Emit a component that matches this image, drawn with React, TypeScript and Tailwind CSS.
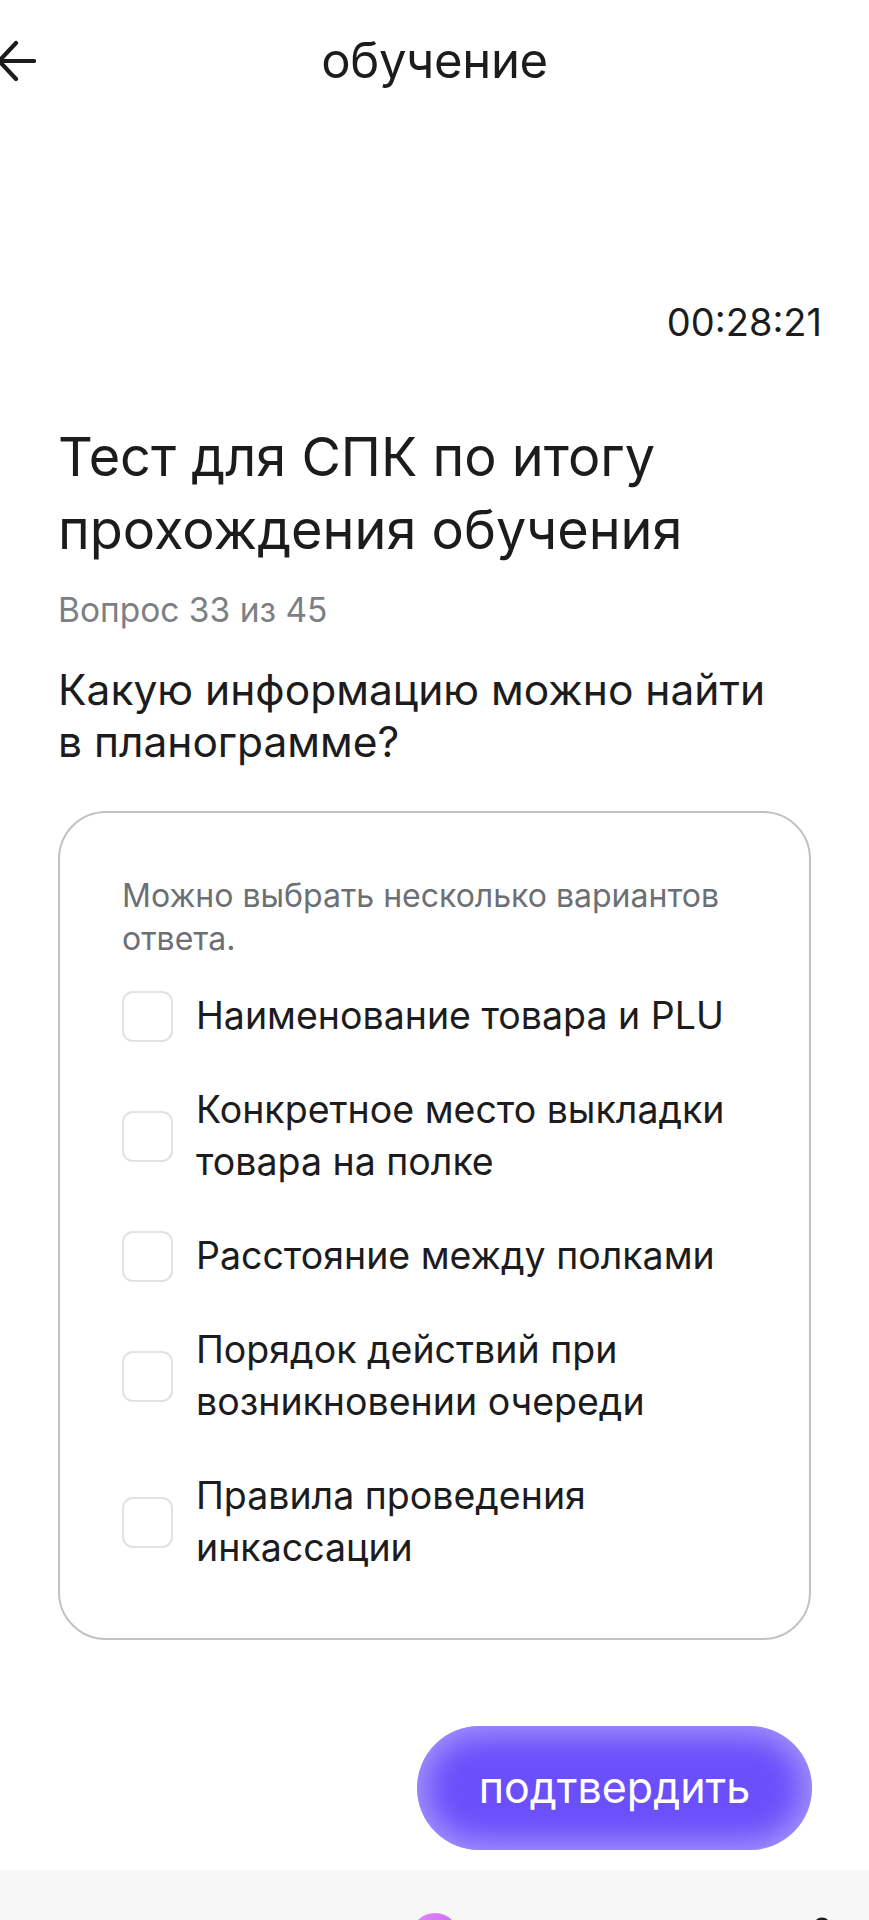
import React from "react";

const font = { fontFamily: "Inter, 'Noto Sans', sans-serif" };

const options: string[][] = [
  ["Наименование товара и PLU"],
  ["Конкретное место выкладки", "товара на полке"],
  ["Расстояние между полками"],
  ["Порядок действий при", "возникновении очереди"],
  ["Правила проведения", "инкассации"],
];

export default function App() {
  return (
    <div
      className="w-full h-[1920px] overflow-hidden bg-white flex flex-col text-[#1c1c1e]"
      style={font}
    >
      {/* header */}
      <div className="h-[122px] shrink-0 grid grid-cols-[1fr_auto_1fr] items-center">
        <div className="flex items-center">
          <svg width="40" height="44" viewBox="0 0 40 44" className="-ml-[4px]">
            <path
              d="M38 22 H5 M20 4 L3 22 L20 40"
              fill="none"
              stroke="#1c1c1e"
              strokeWidth="4.2"
              strokeLinecap="round"
              strokeLinejoin="round"
            />
          </svg>
        </div>
        <div className="text-[49px] leading-[56px] tracking-[-0.3px]">обучение</div>
        <div />
      </div>

      {/* timer */}
      <div className="mt-[178px] pr-[47px] flex justify-end text-[38px] leading-[44px]">
        00:28:21
      </div>

      {/* title */}
      <div className="px-[58px] flex flex-col">
        <h1 className="mt-[76px] text-[54px] leading-[73px] font-normal">
          Тест для СПК по итогу
          <br />
          прохождения обучения
        </h1>
        <div className="mt-[22px] text-[33.5px] leading-[44px] text-[#7c7f84]">
          Вопрос 33 из 45
        </div>
        <div className="mt-[32px] text-[42.5px] leading-[52px]">
          Какую информацию можно найти
          <br />в планограмме?
        </div>

        {/* card */}
        <div className="mt-[43px] border-2 border-[#c2c2c2] rounded-[48px] pt-[61px] pb-[64px] pl-[62px] pr-[30px] flex flex-col">
          <div className="text-[32px] leading-[43px] text-[#6c7075]">
            Можно выбрать несколько вариантов
            <br />
            ответа.
          </div>
          <div className="mt-[30px] flex flex-col gap-[42px]">
            {options.map((lines, i) => (
              <div key={i} className="flex items-center gap-[23px]">
                <div className="w-[51px] h-[51px] shrink-0 rounded-[11px] border-2 border-[#e2e2e2] bg-white" />
                <div className="text-[37.5px] leading-[52px]">
                  {lines.map((l, j) => (
                    <div key={j} className="whitespace-nowrap">
                      {l}
                    </div>
                  ))}
                </div>
              </div>
            ))}
          </div>
        </div>
      </div>

      {/* button */}
      <div className="mt-[86px] pr-[57px] flex justify-end">
        <button className="w-[395px] h-[124px] rounded-full bg-[#6a4ffb] shadow-[inset_0_0_32px_8px_rgba(255,255,255,0.42)] text-white text-[43px] leading-[48px] flex items-center justify-center pb-[2px]">
          подтвердить
        </button>
      </div>

      {/* bottom bar */}
      <div className="mt-[20px] flex-1 bg-[#f7f7f7] flex justify-between items-start pt-[43px] px-[37px]">
        <div className="w-[20px]" />
        <div className="w-[48px] h-[48px] rounded-full bg-gradient-to-br from-[#ee86f7] to-[#a85cf2]" />
        <svg width="20" height="20" viewBox="0 0 20 20" className="mt-[3px]">
          <circle cx="10" cy="10" r="7" fill="none" stroke="#1c1c1e" strokeWidth="3" />
        </svg>
      </div>
    </div>
  );
}
